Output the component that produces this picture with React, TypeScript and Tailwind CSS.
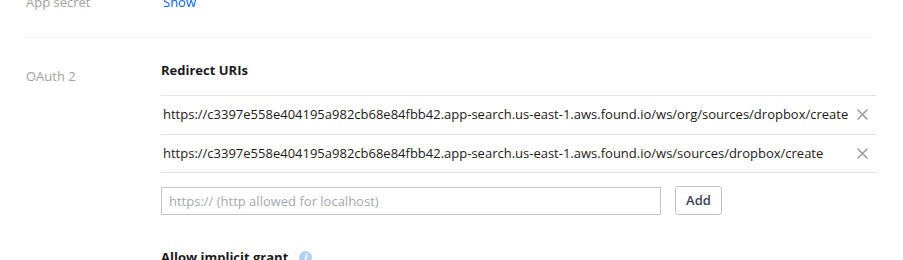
const uris = [
  'https://c3397e558e404195a982cb68e84fbb42.app-search.us-east-1.aws.found.io/ws/org/sources/dropbox/create',
  'https://c3397e558e404195a982cb68e84fbb42.app-search.us-east-1.aws.found.io/ws/sources/dropbox/create',
]

function CloseIcon() {
  return (
    <svg width="11" height="11" viewBox="0 0 11 11" className="text-[#9a9a9a]">
      <path d="M1 1L10 10M10 1L1 10" stroke="currentColor" strokeWidth="1.6" strokeLinecap="round" />
    </svg>
  )
}

export default function App() {
  return (
    <main
      className="h-[260px] overflow-hidden bg-white text-[13px] text-[#1e1919]"
      style={{ fontFamily: '"Open Sans", "Liberation Sans", sans-serif' }}
    >
      <div className="px-6">
        {/* App secret */}
        <div className="-mt-[7px] flex leading-[18px]">
          <div className="w-[137px] pl-[2px] text-[#a1a1a1]">App secret</div>
          <a className="pl-[2px] text-[#0061fe]">Show</a>
        </div>

        <div className="mt-[26px] h-px w-[848px] bg-[#eff4f9]" />

        {/* OAuth 2 */}
        <div className="flex pt-[23px]">
          <div className="w-[137px] pl-[2px] pt-[6px] leading-[18px] text-[#a1a1a1]">OAuth 2</div>
          <div className="w-[715px]">
            <h3 className="font-bold leading-[18px]">Redirect URIs</h3>

            <div className="mt-[16px] border-t border-[#e4e4e4]">
              {uris.map((uri) => (
                <div
                  key={uri}
                  className="flex h-[38.5px] items-center justify-between border-b border-[#e4e4e4] pl-[2px] pr-[8px]"
                >
                  <span>{uri}</span>
                  <CloseIcon />
                </div>
              ))}
            </div>

            <div className="mt-[13px] flex items-center gap-[14px]">
              <input
                placeholder="https:// (http allowed for localhost)"
                className="h-[28px] w-[500px] border border-[#c4c4c4] px-[7px] text-[13px] placeholder:text-[#a6a9b1] outline-none"
              />
              <button className="h-[29px] w-[47px] rounded-[3px] border border-[#c2c2c2] text-[13px] font-semibold text-[#3d4350]">
                Add
              </button>
            </div>

            <div className="mt-[33px] flex items-center gap-[11px]">
              <span className="font-bold leading-[18px]">Allow implicit grant</span>
              <span className="flex h-[13px] w-[13px] items-center justify-center rounded-full bg-[#b3d1f2] text-[10px] font-bold italic leading-none text-white">
                i
              </span>
            </div>
          </div>
        </div>
      </div>
    </main>
  )
}
